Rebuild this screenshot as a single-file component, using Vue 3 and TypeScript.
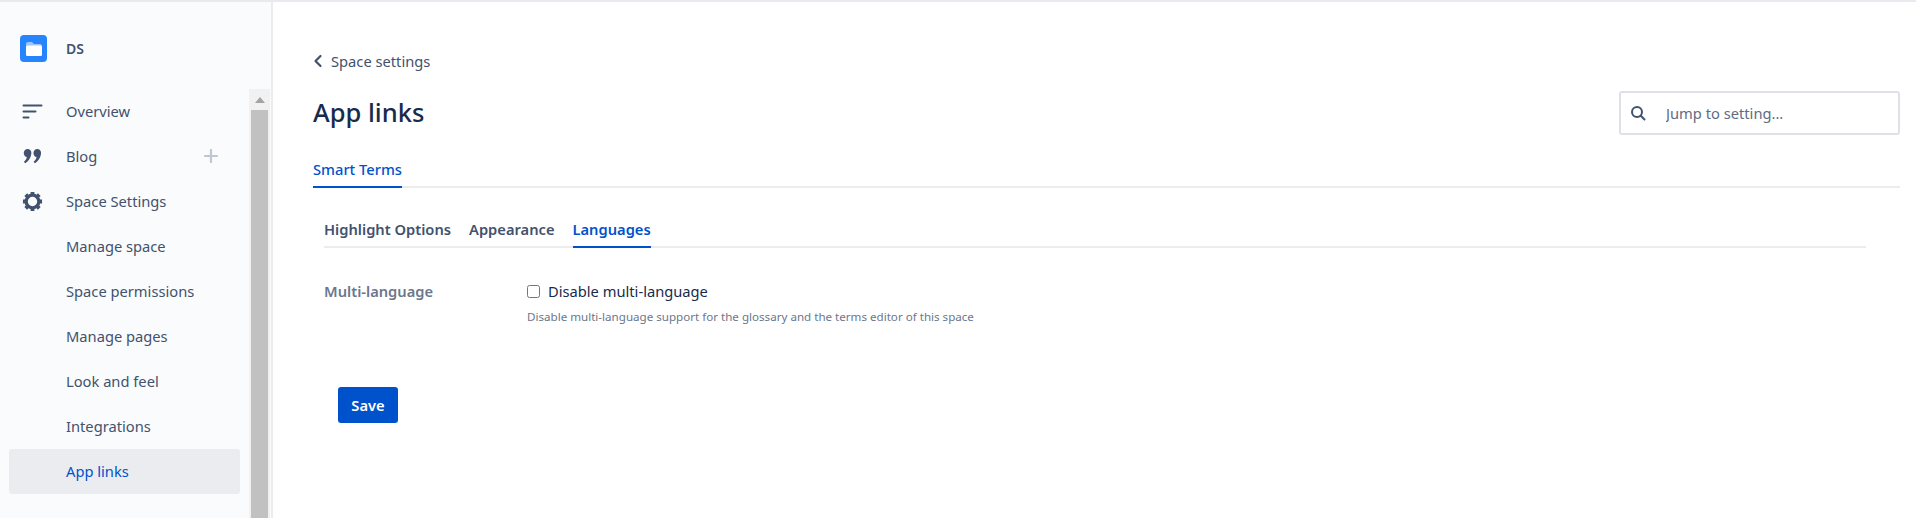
<template>
  <div class="page">
    <aside class="sidebar">
      <div class="space-head">
        <span class="space-logo">
          <svg width="16" height="14" viewBox="0 0 16 14">
            <path d="M0 2C0 .9.900 0 2 0h4l2 2h6c1.100 0 2 .9 2 2v8c0 1.100-.9 2-2 2H2c-1.100 0-2-.9-2-2z" fill="#9cc4ff" />
            <rect x="0" y="3.500" width="16" height="10.500" rx="1.500" fill="#fff" />
          </svg>
        </span>
        <span class="space-name">DS</span>
      </div>
      <div class="nav-wrap">
        <nav class="nav">
          <a class="nav-item">
            <span class="nav-icon">
              <svg width="21" height="15" viewBox="0 0 21 15">
                <rect x="0.500" y="0.500" width="20" height="2" rx="1" fill="#42526e" />
                <rect x="0.500" y="6.500" width="14" height="2" rx="1" fill="#42526e" />
                <rect x="0.500" y="12.500" width="7" height="2" rx="1" fill="#42526e" />
              </svg>
            </span>
            Overview
          </a>
          <a class="nav-item">
            <span class="nav-icon">
              <svg width="19" height="16" viewBox="0 0 20 16">
                <path d="M4.800 0.500C7 0.500 8.800 2.200 8.800 4.600c0 4.300-3.100 9.400-6.600 10.900L1 14.100c1.500-1.200 2.700-3 3.100-5C2.300 9 .8 7.200.8 4.800.8 2.300 2.500.5 4.800.5zM15 .5c2.200 0 4 1.700 4 4.100 0 4.300-3.100 9.400-6.600 10.900l-1.200-1.400c1.500-1.200 2.700-3 3.100-5-1.800-.1-3.300-1.900-3.300-4.300C11 2.300 12.700.5 15 .5z" fill="#42526e" />
              </svg>
            </span>
            Blog
            <svg class="plus" width="14" height="14" viewBox="0 0 14 14">
              <path d="M7 1v12M1 7h12" stroke="#c1c7d0" stroke-width="2.200" stroke-linecap="round" />
            </svg>
          </a>
          <a class="nav-item">
            <span class="nav-icon">
              <svg width="21" height="21" viewBox="0 0 22 22">
                <circle cx="11" cy="11" r="6.600" fill="none" stroke="#42526e" stroke-width="3.400" />
                <path d="M11 1v4M11 17v4M1 11h4M17 11h4M3.900 3.900l2.800 2.800M15.300 15.300l2.800 2.800M3.900 18.100l2.800-2.800M15.300 6.700l2.800-2.800" stroke="#42526e" stroke-width="4" />
              </svg>
            </span>
            Space Settings
          </a>
          <a v-for="item in subItems" :key="item" class="nav-item" :class="{ active: item === 'App links' }">
            <span class="nav-icon"></span>
            {{ item }}
          </a>
        </nav>
        <div class="scrollbar">
          <span class="scroll-arrow"></span>
          <div class="scroll-thumb"></div>
        </div>
      </div>
    </aside>

    <main class="main">
      <a class="back">
        <svg width="10" height="14" viewBox="0 0 10 14">
          <path d="M7.500 2 2.500 7l5 5" fill="none" stroke="#42526e" stroke-width="2.200" stroke-linecap="round" stroke-linejoin="round" />
        </svg>
        Space settings
      </a>

      <header class="title-row">
        <h1>App links</h1>
        <label class="search">
          <svg width="16" height="16" viewBox="0 0 16 16">
            <circle cx="7" cy="7" r="5" fill="none" stroke="#42526e" stroke-width="2" />
            <path d="m10.800 10.800 3.700 3.700" stroke="#42526e" stroke-width="2" stroke-linecap="round" />
          </svg>
          <input type="text" placeholder="Jump to setting..." />
        </label>
      </header>

      <div class="tabs">
        <span class="tab current">Smart Terms</span>
      </div>

      <section class="panel">
        <div class="subtabs">
          <span v-for="tab in subTabs" :key="tab" class="subtab" :class="{ current: tab === 'Languages' }">{{ tab }}</span>
        </div>

        <div class="field">
          <div class="field-label">Multi-language</div>
          <div class="field-body">
            <label class="check">
              <input type="checkbox" />
              Disable multi-language
            </label>
            <p class="help">Disable multi-language support for the glossary and the terms editor of this space</p>
          </div>
        </div>

        <button class="save" type="button">Save</button>
      </section>
    </main>
  </div>
</template>

<script setup lang="ts">
const subItems: string[] = ['Manage space', 'Space permissions', 'Manage pages', 'Look and feel', 'Integrations', 'App links']
const subTabs: string[] = ['Highlight Options', 'Appearance', 'Languages']
</script>

<style>
html,
body {
  margin: 0;
  background: #fff;
  overflow: hidden;
}
</style>

<style scoped>
.page {
  display: flex;
  height: 518px;
  box-sizing: border-box;
  border-top: 2px solid #e9eaf0;
  font-family: "Noto Sans", "Liberation Sans", sans-serif;
  font-size: 14.7px;
  color: #42526e;
  overflow: hidden;
}

.sidebar {
  width: 273px;
  flex: none;
  box-sizing: border-box;
  background: #fafbfc;
  border-right: 2px solid #ebecf0;
}

.space-head {
  display: flex;
  align-items: center;
  height: 27px;
  margin: 33px 0 27px 20px;
}

.space-logo {
  width: 27px;
  height: 27px;
  border-radius: 4px;
  background: #2684ff;
  display: flex;
  align-items: center;
  justify-content: center;
  margin-right: 19px;
}

.space-name {
  font-size: 14px;
  font-weight: 600;
}

.nav-wrap {
  display: flex;
}

.nav {
  width: 249px;
  flex: none;
  box-sizing: border-box;
  padding: 0 9px;
}

.nav-item {
  display: flex;
  align-items: center;
  height: 45px;
  box-sizing: border-box;
  padding-bottom: 2px;
  border-radius: 3px;
  color: #42526e;
}

.nav-item.active {
  background: #ebecf0;
  color: #0052cc;
}

.nav-icon {
  width: 57px;
  flex: none;
  display: flex;
  justify-content: center;
  box-sizing: border-box;
  padding-right: 11px;
  margin-top: 1px;
}

.plus {
  margin-left: auto;
  margin-right: 22px;
}

.scrollbar {
  width: 21px;
  flex: none;
  background: #f1f1f1;
  display: flex;
  flex-direction: column;
  align-items: center;
}

.scroll-arrow {
  flex: none;
  width: 0;
  height: 0;
  margin: 8px 0 7px;
  border-left: 5px solid transparent;
  border-right: 5px solid transparent;
  border-bottom: 6px solid #a3a3a3;
}

.scroll-thumb {
  flex: none;
  width: 17px;
  height: 420px;
  background: #c1c1c1;
}

.main {
  flex: 1;
  min-width: 0;
  padding: 0 16px 0 40px;
}

.back {
  display: flex;
  align-items: center;
  gap: 8px;
  height: 20px;
  margin-top: 49px;
  color: #42526e;
}

.title-row {
  display: flex;
  align-items: center;
  justify-content: space-between;
  height: 44px;
  margin-top: 20px;
}

h1 {
  margin: 0 0 2px;
  font-size: 25.500px;
  font-weight: 500;
  color: #172b4d;
}

.search {
  width: 281px;
  height: 44px;
  box-sizing: border-box;
  border: 2px solid #dfe1e6;
  border-radius: 3px;
  display: flex;
  align-items: center;
  padding-left: 9px;
  gap: 20px;
}

.search input {
  flex: 1;
  min-width: 0;
  border: 0;
  outline: 0;
  padding: 0;
  background: transparent;
  font: inherit;
  color: #42526e;
}

.search input::placeholder {
  color: #5e6c84;
  opacity: 1;
}

.tabs {
  display: flex;
  margin-top: 21px;
  border-bottom: 2px solid #ebecf0;
}

.tab {
  height: 30px;
  line-height: 26px;
  margin-bottom: -2px;
  font-weight: 500;
  color: #0052cc;
  border-bottom: 2px solid #0052cc;
}

.panel {
  padding: 0 34px 0 11px;
}

.subtabs {
  display: flex;
  gap: 18px;
  margin-top: 32px;
  border-bottom: 2px solid #ebecf0;
}

.subtab {
  height: 26px;
  line-height: 19px;
  margin-bottom: -2px;
  border-bottom: 2px solid transparent;
  font-weight: 600;
  color: #42526e;
}

.subtab.current {
  color: #0052cc;
  border-bottom-color: #0052cc;
}

.field {
  display: flex;
  margin-top: 32px;
}

.field-label {
  width: 203px;
  flex: none;
  line-height: 22px;
  font-weight: 600;
  color: #6b778c;
}

.check {
  display: flex;
  align-items: center;
  height: 22px;
  gap: 8px;
  color: #172b4d;
}

.check input {
  width: 13px;
  height: 13px;
  margin: 0;
}

.help {
  margin: 7px 0 0;
  font-size: 11.600px;
  line-height: 16px;
  color: #6b778c;
}

.save {
  display: block;
  width: 60px;
  height: 36px;
  margin: 62px 0 0 14px;
  border: 0;
  border-radius: 3px;
  background: #0052cc;
  color: #fff;
  font: inherit;
  font-size: 14.7px;
  font-weight: 600;
}
</style>
